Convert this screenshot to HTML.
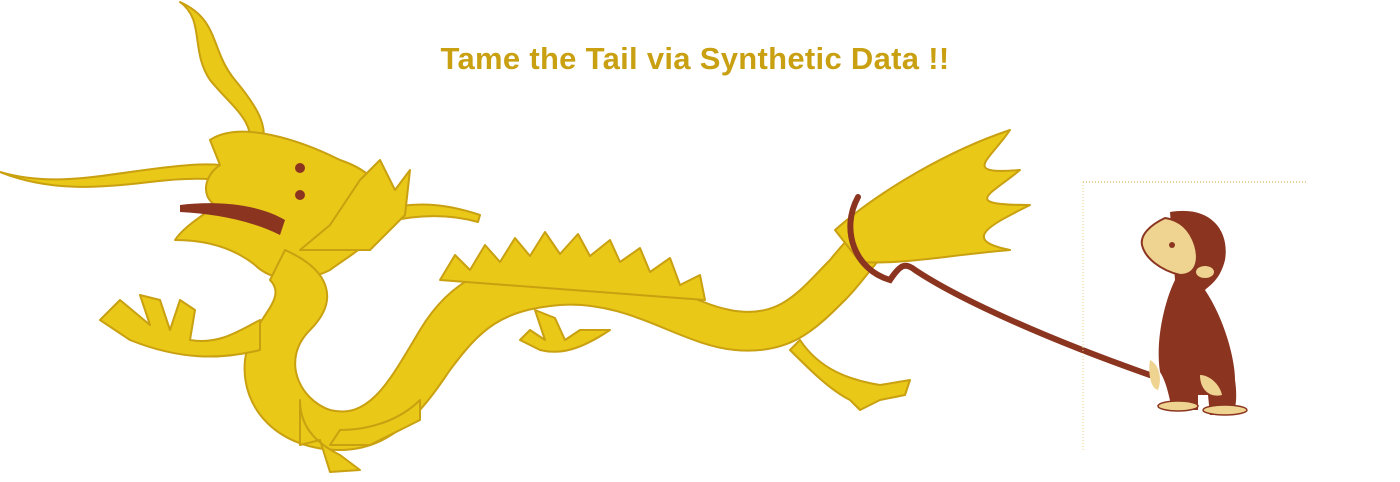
<!DOCTYPE html>
<html><head><meta charset="utf-8"><style>
html,body{margin:0;padding:0;background:#fff;width:1400px;height:482px;overflow:hidden}
.t{position:absolute;left:0;top:41px;width:1390px;text-align:center;font:bold 31px "Liberation Sans",sans-serif;color:#c9a012;letter-spacing:0.3px}
svg{position:absolute;left:0;top:0}
</style></head><body>
<svg width="1400" height="482" viewBox="0 0 1400 482">
<g fill="#e9c818" stroke="#c9a010" stroke-width="2" stroke-linejoin="round">
<path d="M180 2 C220 20 210 50 235 80 C260 110 270 130 260 150 L250 148 C255 120 230 105 210 80 C190 50 205 20 180 2Z"/>
<path d="M0 172 C60 190 120 170 190 165 C230 162 250 170 260 180 L255 190 C230 178 200 176 150 182 C100 188 50 192 0 172Z"/>
<path d="M380 210 C420 200 450 205 480 215 L478 222 C450 214 420 214 385 222Z"/>
<path d="M210 140 C240 120 300 140 340 160 C370 170 390 190 385 215 C380 240 350 255 330 270 C300 285 270 280 255 265 C230 245 200 240 175 240 C185 225 205 215 215 205 C200 195 205 175 220 165Z"/>
<path d="M285 250 C330 270 340 300 310 330 C280 360 300 400 330 410 C370 420 390 380 420 330 C450 280 490 260 560 260 C640 260 680 300 730 310 C780 320 800 290 830 260 C850 235 870 215 900 200 L915 230 C880 250 870 275 845 300 C815 330 790 355 735 350 C680 345 630 300 560 305 C500 310 480 330 450 370 C420 415 390 450 340 450 C280 450 240 410 245 360 C250 320 290 300 270 280Z"/>
<path d="M835 230 C880 190 950 150 1010 130 C990 160 960 175 1020 170 C990 195 960 205 1030 205 C990 225 960 240 1010 250 C950 255 900 265 860 262Z"/>
<path d="M440 280 L455 255 L470 270 L485 245 L500 262 L515 238 L530 256 L545 232 L560 254 L578 234 L590 256 L610 240 L620 262 L640 248 L650 272 L670 258 L680 285 L700 275 L705 300Z"/>
<path d="M300 250 L330 225 L360 180 L380 160 L395 190 L410 170 L405 215 L370 250Z"/>
<path d="M260 350 C220 360 180 360 130 340 L100 320 L120 300 L150 325 L140 295 L160 300 L170 330 L180 300 L195 310 L190 340 C220 345 240 330 260 320Z"/>
<path d="M300 400 C300 430 320 445 340 455 L360 470 L330 472 L320 440 L300 445 Z"/>
<path d="M610 330 C580 350 560 355 540 350 L520 340 L530 330 L545 340 L535 310 L555 318 L565 340 L580 330Z"/>
<path d="M800 340 C820 370 850 380 880 385 L910 380 L905 395 L880 400 L860 410 L850 400 C830 390 810 370 790 350Z"/>
<path d="M420 400 C400 420 370 430 340 430 L330 445 L370 445 L420 420Z"/>
</g>
<path d="M180 205 C220 200 260 205 285 220 L280 235 C250 220 215 214 180 212Z" fill="#8b3520"/>
<circle cx="300" cy="168" r="5" fill="#8b3520"/><circle cx="300" cy="195" r="5" fill="#8b3520"/>
<path d="M858 197 C840 230 855 270 890 280 C900 265 905 262 915 270 C960 300 1050 340 1150 375" fill="none" stroke="#8b3520" stroke-width="6" stroke-linecap="round"/>
<line x1="1083" y1="182" x2="1306" y2="182" stroke="#c9a030" stroke-width="1" stroke-dasharray="1,2"/>
<line x1="1083" y1="182" x2="1083" y2="450" stroke="#e8d08a" stroke-width="1" stroke-dasharray="1,2"/>
<g>
<path d="M1170 212 C1210 205 1230 230 1225 260 C1220 280 1210 285 1205 290 C1225 320 1235 360 1235 380 C1238 400 1235 415 1230 415 L1210 415 L1208 395 L1198 395 L1198 410 L1172 410 C1168 390 1165 380 1160 372 C1155 340 1165 300 1175 280Z" fill="#8b3520"/>
<path d="M1165 218 C1150 225 1140 235 1142 245 C1145 258 1160 270 1180 275 C1195 275 1200 262 1195 245 C1190 230 1180 220 1165 218Z" fill="#efd391" stroke="#8b3520" stroke-width="2"/>
<circle cx="1172" cy="245" r="3" fill="#8b3520"/>
<ellipse cx="1205" cy="272" rx="9" ry="6" fill="#efd391"/>
<path d="M1150 360 C1160 365 1162 380 1158 390 C1150 388 1148 372 1150 360Z" fill="#efd391"/>
<path d="M1200 375 C1210 375 1220 385 1222 395 C1210 398 1200 390 1200 375Z" fill="#efd391"/>
<ellipse cx="1178" cy="406" rx="20" ry="5" fill="#efd391" stroke="#8b3520" stroke-width="1.5"/>
<ellipse cx="1225" cy="410" rx="22" ry="5" fill="#efd391" stroke="#8b3520" stroke-width="1.5"/>
</g>
</svg>
<div class="t">Tame the Tail via Synthetic Data !!</div>
</body></html>
